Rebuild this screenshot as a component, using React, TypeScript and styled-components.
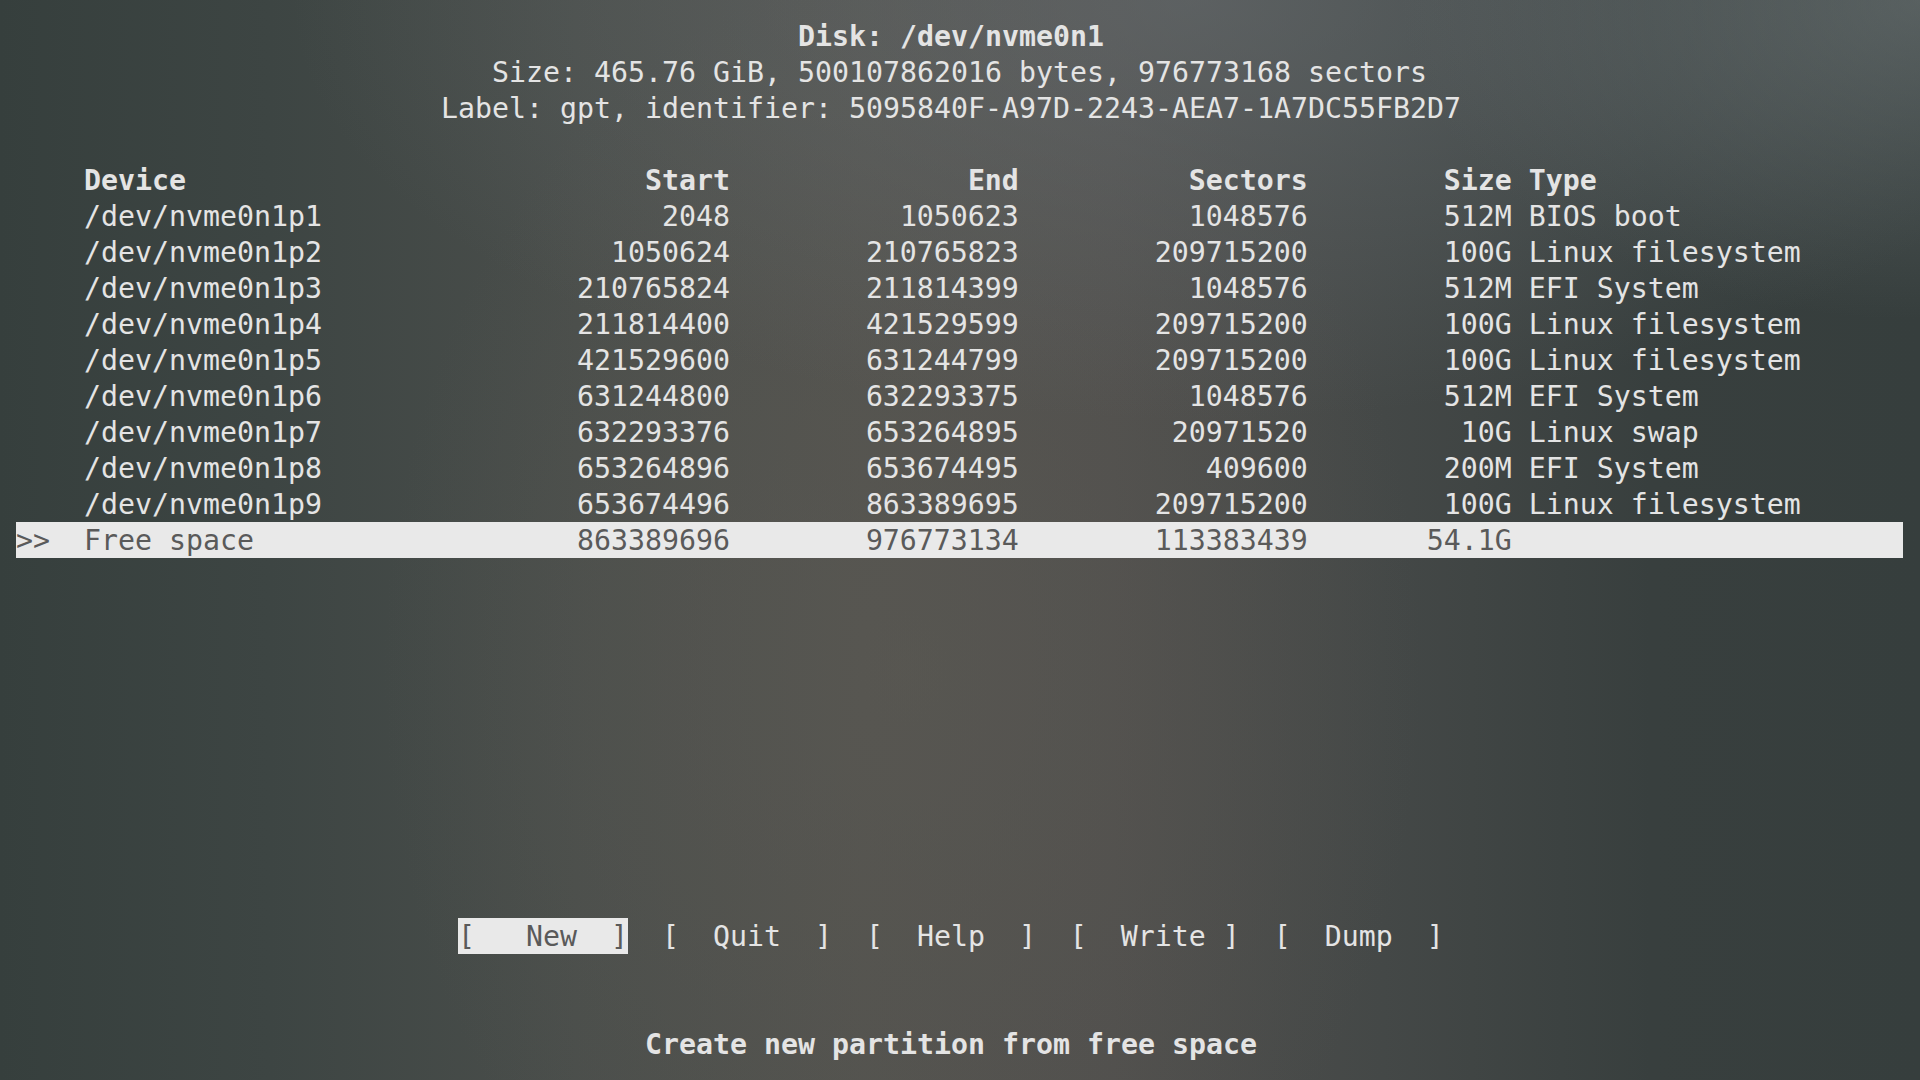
import React from 'react';
import styled, { createGlobalStyle } from 'styled-components';

const COLS = 111;

const GlobalStyle = createGlobalStyle`
    html, body {
        margin: 0;
        padding: 0;
        background: #3a4240;
    }
`;

const Screen = styled.div`
    box-sizing: border-box;
    width: 1920px;
    height: 1080px;
    overflow: hidden;
    padding: 18px 16px;
    font-family: 'DejaVu Sans Mono', 'Liberation Mono', monospace;
    font-size: 28.24px;
    line-height: 36px;
    color: #e4e4e4;
    white-space: pre;
    background:
        radial-gradient(ellipse 520px 320px at 100% 0%, rgba(112, 120, 121, 0.55), transparent 100%),
        radial-gradient(ellipse 900px 420px at 62% 0%, rgba(108, 116, 120, 0.5), transparent 100%),
        radial-gradient(ellipse 520px 700px at 47% 62%, rgba(92, 90, 84, 0.55), transparent 100%),
        linear-gradient(
            90deg,
            #363f3d 0%,
            #3d4543 14%,
            #4a4e4b 30%,
            #52524e 45%,
            #504f4d 58%,
            #444847 72%,
            #383f3e 86%,
            #363e3d 100%
        );
`;

const Terminal = styled.div`
    width: ${COLS}ch;
    display: flex;
    flex-direction: column;
`;

const Line = styled.div<{ $bold?: boolean }>`
    box-sizing: border-box;
    height: 36px;
    padding-top: 1px;
    font-weight: ${(p) => (p.$bold ? 700 : 400)};
`;

const DiskInfo = styled.div`
    display: flex;
    flex-direction: column;
    margin-bottom: 36px;
`;

const Table = styled.div`
    display: flex;
    flex-direction: column;
`;

const Row = styled.div<{ $head?: boolean; $selected?: boolean }>`
    box-sizing: border-box;
    display: flex;
    height: 36px;
    padding-top: 1px;
    font-weight: ${(p) => (p.$head ? 700 : 400)};
    background: ${(p) => (p.$selected ? '#e9e9e9' : 'transparent')};
    color: ${(p) => (p.$selected ? '#5a5a5a' : 'inherit')};
`;

const Cell = styled.span<{ $w: number; $right?: boolean }>`
    display: inline-block;
    flex: none;
    width: ${(p) => p.$w}ch;
    text-align: ${(p) => (p.$right ? 'right' : 'left')};
    overflow: hidden;
`;

const TypeCell = styled.span`
    flex: 1;
    padding-left: 1ch;
`;

const ButtonBar = styled.div`
    display: flex;
    height: 36px;
    margin-top: 360px;
    padding-left: 26ch;
    gap: 2ch;
`;

const MenuButton = styled.span<{ $active?: boolean }>`
    box-sizing: border-box;
    display: inline-block;
    width: 10ch;
    height: 36px;
    padding-top: 1px;
    background: ${(p) => (p.$active ? '#e9e9e9' : 'transparent')};
    color: ${(p) => (p.$active ? '#5a5a5a' : 'inherit')};
`;

const Hint = styled(Line)`
    margin-top: 72px;
`;

const center = (s: string) => ' '.repeat(Math.floor((COLS - s.length) / 2)) + s;

const partitions = [
    ['/dev/nvme0n1p1', '2048', '1050623', '1048576', '512M', 'BIOS boot'],
    ['/dev/nvme0n1p2', '1050624', '210765823', '209715200', '100G', 'Linux filesystem'],
    ['/dev/nvme0n1p3', '210765824', '211814399', '1048576', '512M', 'EFI System'],
    ['/dev/nvme0n1p4', '211814400', '421529599', '209715200', '100G', 'Linux filesystem'],
    ['/dev/nvme0n1p5', '421529600', '631244799', '209715200', '100G', 'Linux filesystem'],
    ['/dev/nvme0n1p6', '631244800', '632293375', '1048576', '512M', 'EFI System'],
    ['/dev/nvme0n1p7', '632293376', '653264895', '20971520', '10G', 'Linux swap'],
    ['/dev/nvme0n1p8', '653264896', '653674495', '409600', '200M', 'EFI System'],
    ['/dev/nvme0n1p9', '653674496', '863389695', '209715200', '100G', 'Linux filesystem'],
];

const buttons = ['[   New  ]', '[  Quit  ]', '[  Help  ]', '[  Write ]', '[  Dump  ]'];

type RowProps = {
    cells: string[];
    head?: boolean;
    selected?: boolean;
};

const TableRow = ({ cells, head, selected }: RowProps) => (
    <Row $head={head} $selected={selected}>
        <Cell $w={4}>{selected ? '>>' : ''}</Cell>
        <Cell $w={24}>{cells[0]}</Cell>
        <Cell $w={14} $right>
            {cells[1]}
        </Cell>
        <Cell $w={17} $right>
            {cells[2]}
        </Cell>
        <Cell $w={17} $right>
            {cells[3]}
        </Cell>
        <Cell $w={12} $right>
            {cells[4]}
        </Cell>
        <TypeCell>{cells[5]}</TypeCell>
    </Row>
);

export default function App() {
    return (
        <Screen>
            <GlobalStyle />
            <Terminal>
                <DiskInfo>
                    <Line $bold>{center('Disk: /dev/nvme0n1')}</Line>
                    <Line>{center('Size: 465.76 GiB, 500107862016 bytes, 976773168 sectors')}</Line>
                    <Line>{center('Label: gpt, identifier: 5095840F-A97D-2243-AEA7-1A7DC55FB2D7')}</Line>
                </DiskInfo>
                <Table>
                    <TableRow head cells={['Device', 'Start', 'End', 'Sectors', 'Size', 'Type']} />
                    {partitions.map((p) => (
                        <TableRow key={p[0]} cells={p} />
                    ))}
                    <TableRow
                        selected
                        cells={['Free space', '863389696', '976773134', '113383439', '54.1G', '']}
                    />
                </Table>
                <ButtonBar>
                    {buttons.map((b, i) => (
                        <MenuButton key={b} $active={i === 0}>
                            {b}
                        </MenuButton>
                    ))}
                </ButtonBar>
                <Hint $bold>{center('Create new partition from free space')}</Hint>
            </Terminal>
        </Screen>
    );
}
